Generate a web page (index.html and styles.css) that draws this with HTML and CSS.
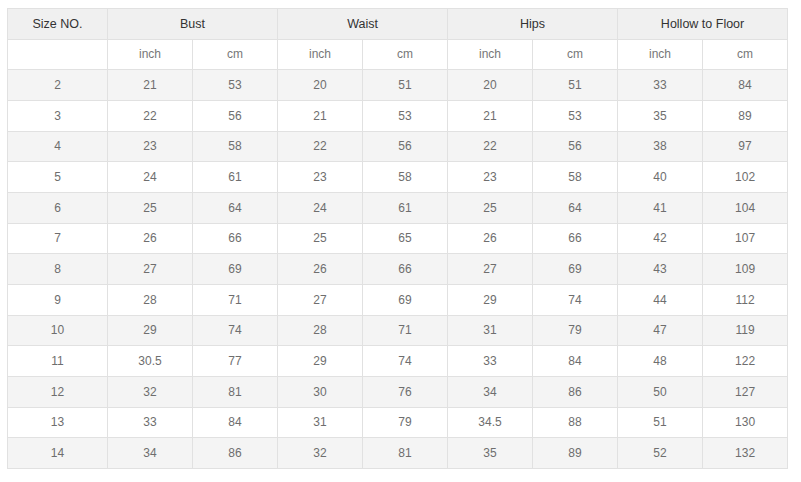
FILE: index.html
```html
<!DOCTYPE html>
<html>
<head>
<meta charset="utf-8">
<link rel="stylesheet" href="styles.css">
</head>
<body>
<table class="size-table">
  <colgroup>
    <col class="c-size">
    <col><col><col><col><col><col><col><col>
  </colgroup>
  <thead>
    <tr class="head">
      <th>Size NO.</th>
      <th colspan="2">Bust</th>
      <th colspan="2">Waist</th>
      <th colspan="2">Hips</th>
      <th colspan="2">Hollow to Floor</th>
    </tr>
    <tr class="sub">
      <td></td>
      <td>inch</td><td>cm</td>
      <td>inch</td><td>cm</td>
      <td>inch</td><td>cm</td>
      <td>inch</td><td>cm</td>
    </tr>
  </thead>
  <tbody>
    <tr><td>2</td><td>21</td><td>53</td><td>20</td><td>51</td><td>20</td><td>51</td><td>33</td><td>84</td></tr>
    <tr><td>3</td><td>22</td><td>56</td><td>21</td><td>53</td><td>21</td><td>53</td><td>35</td><td>89</td></tr>
    <tr><td>4</td><td>23</td><td>58</td><td>22</td><td>56</td><td>22</td><td>56</td><td>38</td><td>97</td></tr>
    <tr><td>5</td><td>24</td><td>61</td><td>23</td><td>58</td><td>23</td><td>58</td><td>40</td><td>102</td></tr>
    <tr><td>6</td><td>25</td><td>64</td><td>24</td><td>61</td><td>25</td><td>64</td><td>41</td><td>104</td></tr>
    <tr><td>7</td><td>26</td><td>66</td><td>25</td><td>65</td><td>26</td><td>66</td><td>42</td><td>107</td></tr>
    <tr><td>8</td><td>27</td><td>69</td><td>26</td><td>66</td><td>27</td><td>69</td><td>43</td><td>109</td></tr>
    <tr><td>9</td><td>28</td><td>71</td><td>27</td><td>69</td><td>29</td><td>74</td><td>44</td><td>112</td></tr>
    <tr><td>10</td><td>29</td><td>74</td><td>28</td><td>71</td><td>31</td><td>79</td><td>47</td><td>119</td></tr>
    <tr><td>11</td><td>30.5</td><td>77</td><td>29</td><td>74</td><td>33</td><td>84</td><td>48</td><td>122</td></tr>
    <tr><td>12</td><td>32</td><td>81</td><td>30</td><td>76</td><td>34</td><td>86</td><td>50</td><td>127</td></tr>
    <tr><td>13</td><td>33</td><td>84</td><td>31</td><td>79</td><td>34.5</td><td>88</td><td>51</td><td>130</td></tr>
    <tr><td>14</td><td>34</td><td>86</td><td>32</td><td>81</td><td>35</td><td>89</td><td>52</td><td>132</td></tr>
  </tbody>
</table>
</body>
</html>
```

FILE: styles.css
```css
html, body {
  margin: 0;
  padding: 0;
  background: #ffffff;
}
body {
  padding: 8px 0 0 7px;
  font-family: "Liberation Sans", Arial, sans-serif;
}
.size-table {
  border-collapse: collapse;
  table-layout: fixed;
  width: 781px;
  height: 460px;
  font-size: 12px;
  color: #6e6e6e;
}
.size-table col { width: 85px; }
.size-table col.c-size { width: 100px; }
.size-table th,
.size-table td {
  border: 1px solid #e1e1e1;
  text-align: center;
  vertical-align: middle;
  padding: 0;
  height: 29.67px;
}
.size-table .head th {
  background: #f0f0f0;
  color: #333333;
  font-weight: normal;
  font-size: 12.5px;
}
.size-table .sub td {
  background: #ffffff;
  color: #777777;
}
.size-table tbody tr:nth-child(odd) td {
  background: #f4f4f4;
}
.size-table tbody tr:nth-child(even) td {
  background: #ffffff;
}
```
